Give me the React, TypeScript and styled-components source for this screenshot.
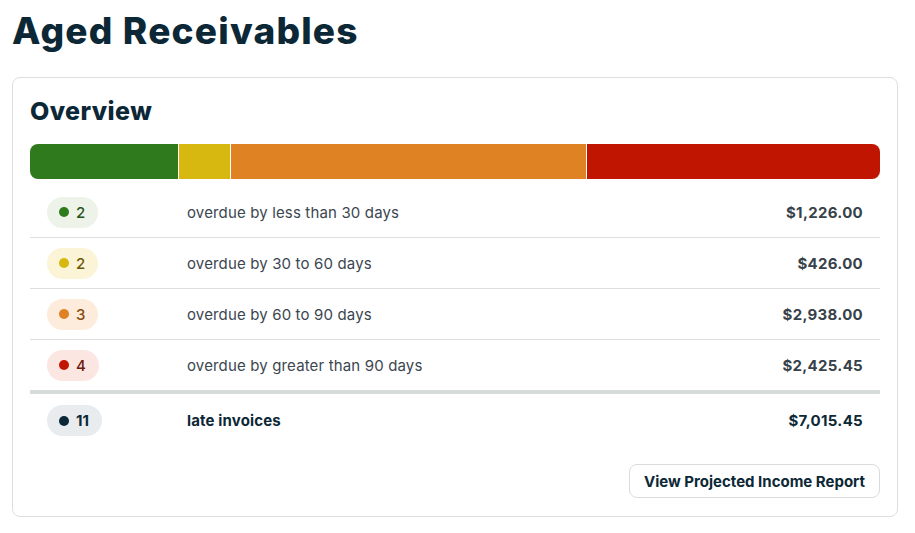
import React from "react";
import styled, { createGlobalStyle } from "styled-components";

const GlobalStyle = createGlobalStyle`
	body {
		margin: 0;
		background: #ffffff;
		font-family: Inter, "Noto Sans", sans-serif;
		color: #0c2836;
	}
`;

type Bucket = {
	count: number;
	label: string;
	amount: number;
	color: string;
	tint: string;
	ink: string;
};

const buckets: Bucket[] = [
	{ count: 2, label: "overdue by less than 30 days", amount: 1226, color: "#2e7a1c", tint: "#edf3e8", ink: "#245217" },
	{ count: 2, label: "overdue by 30 to 60 days", amount: 426, color: "#d6b811", tint: "#fbf4d6", ink: "#6b5806" },
	{ count: 3, label: "overdue by 60 to 90 days", amount: 2938, color: "#df8223", tint: "#fdecdb", ink: "#8a4a0e" },
	{ count: 4, label: "overdue by greater than 90 days", amount: 2425.45, color: "#c01500", tint: "#fbe6e2", ink: "#6e1a0e" },
];

const money = (n: number) =>
	"$" + n.toLocaleString("en-US", { minimumFractionDigits: 2, maximumFractionDigits: 2 });

const App: React.FC = () => {
	const total = buckets.reduce((s, b) => s + b.amount, 0);
	const count = buckets.reduce((s, b) => s + b.count, 0);
	return (
		<Page>
			<GlobalStyle />
			<Title>Aged Receivables</Title>
			<Card>
				<Heading>Overview</Heading>
				<Bar>
					{buckets.map((b, i) => (
						<Segment key={i} $color={b.color} style={{ flexGrow: b.amount }} />
					))}
				</Bar>
				<Rows>
					{buckets.map((b, i) => (
						<Row key={i}>
							<PillCell>
								<Pill $tint={b.tint} $ink={b.ink}>
									<Dot $color={b.color} />
									{b.count}
								</Pill>
							</PillCell>
							<Label>{b.label}</Label>
							<Amount>{money(b.amount)}</Amount>
						</Row>
					))}
					<TotalRow>
						<PillCell>
							<Pill $tint="#e8ecef" $ink="#0c2836" $bold>
								<Dot $color="#0c2836" />
								{count}
							</Pill>
						</PillCell>
						<Label $bold>late invoices</Label>
						<Amount $dark>{money(total)}</Amount>
					</TotalRow>
				</Rows>
				<Footer>
					<Button>View Projected Income Report</Button>
				</Footer>
			</Card>
		</Page>
	);
};

const Page = styled.div`
	padding: 10px 17px 16px 12px;
`;

const Title = styled.h1`
	margin: 0 0 25px;
	font-size: 37px;
	line-height: 42px;
	font-weight: 800;
	letter-spacing: 1.2px;
	color: #0c2836;
`;

const Card = styled.section`
	border: 1px solid #dcdfe1;
	border-radius: 8px;
	padding: 18px 17px 18px 17px;
`;

const Heading = styled.h2`
	margin: 0 0 18px;
	font-size: 25px;
	line-height: 30px;
	font-weight: 800;
	letter-spacing: 0.4px;
	color: #0c2836;
`;

const Bar = styled.div`
	display: flex;
	gap: 1px;
	height: 35px;
	border-radius: 8px;
	overflow: hidden;
	margin-bottom: 8px;
`;

const Segment = styled.div<{ $color: string }>`
	flex-basis: 0;
	background: ${(p) => p.$color};
`;

const Rows = styled.div`
	display: flex;
	flex-direction: column;
`;

const Row = styled.div`
	display: grid;
	grid-template-columns: 157px 1fr auto;
	align-items: center;
	height: 51px;
	box-sizing: border-box;
	border-bottom: 1px solid #dcdfe1;
	padding-right: 17px;

	&:nth-child(4) {
		border-bottom: 4px solid #d5dcdb;
		height: 54px;
	}
`;

const TotalRow = styled(Row)`
	border-bottom: none;
	height: 53px;
`;

const PillCell = styled.div`
	padding-left: 17px;
`;

const Pill = styled.span<{ $tint: string; $ink: string; $bold?: boolean }>`
	display: inline-flex;
	align-items: center;
	gap: 7px;
	height: 31px;
	padding: 0 13px 0 12px;
	border-radius: 16px;
	background: ${(p) => p.$tint};
	color: ${(p) => p.$ink};
	font-size: 15px;
	font-weight: ${(p) => (p.$bold ? 700 : 500)};
`;

const Dot = styled.span<{ $color: string }>`
	width: 10px;
	height: 10px;
	border-radius: 50%;
	background: ${(p) => p.$color};
`;

const Label = styled.span<{ $bold?: boolean }>`
	font-size: 15px;
	letter-spacing: 0.15px;
	font-weight: ${(p) => (p.$bold ? 700 : 400)};
	color: ${(p) => (p.$bold ? "#0c2836" : "#3b4650")};
`;

const Amount = styled.span<{ $dark?: boolean }>`
	font-size: 15px;
	font-weight: 700;
	letter-spacing: 0.3px;
	color: ${(p) => (p.$dark ? "#0c2836" : "#37414a")};
`;

const Footer = styled.div`
	display: flex;
	justify-content: flex-end;
	margin-top: 17px;
`;

const Button = styled.button`
	height: 34px;
	padding: 0 14px;
	background: #ffffff;
	border: 1px solid #d8dcdf;
	border-radius: 8px;
	font-family: Inter, "Noto Sans", sans-serif;
	font-size: 15px;
	font-weight: 700;
	color: #0c2836;
	cursor: pointer;
`;

export default App;
